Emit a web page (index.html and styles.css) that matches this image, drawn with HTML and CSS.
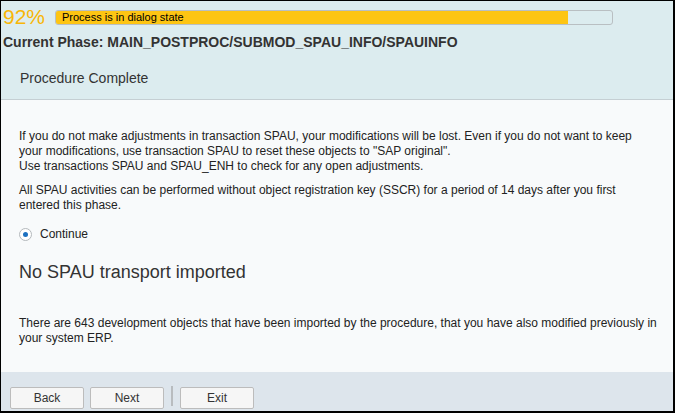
FILE: index.html
```html
<!DOCTYPE html>
<html>
<head>
<meta charset="utf-8">
<link rel="stylesheet" href="styles.css">
</head>
<body>
<div class="window">
  <div class="header">
    <div class="progress-row">
      <span class="pct">92%</span>
      <div class="bar">
        <div class="fill" style="width:92%"></div>
        <span class="bar-label">Process is in dialog state</span>
      </div>
    </div>
    <div class="phase">Current Phase: MAIN_POSTPROC/SUBMOD_SPAU_INFO/SPAUINFO</div>
    <div class="title">Procedure Complete</div>
  </div>
  <div class="content">
    <p class="para narrow first">If you do not make adjustments in transaction SPAU, your modifications will be lost. Even if you do not want to keep your modifications, use transaction SPAU to reset these objects to "SAP original".<br>Use transactions SPAU and SPAU_ENH to check for any open adjustments.</p>
    <p class="para narrow">All SPAU activities can be performed without object registration key (SSCR) for a period of 14 days after you first entered this phase.</p>
    <div class="radio-row">
      <span class="radio"><span class="dot"></span></span>
      <span class="radio-label">Continue</span>
    </div>
    <h2 class="heading">No SPAU transport imported</h2>
    <p class="para last">There are 643 development objects that have been imported by the procedure, that you have also modified previously in your system ERP.</p>
  </div>
  <div class="footer">
    <button class="btn">Back</button>
    <button class="btn">Next</button>
    <span class="sep"></span>
    <button class="btn">Exit</button>
  </div>
</div>
</body>
</html>
```
FILE: styles.css
```css
html, body {
  margin: 0;
  padding: 0;
}
body {
  font-family: "Liberation Sans", Arial, sans-serif;
  background: #ffffff;
}
.window {
  width: 675px;
  height: 413px;
  box-sizing: border-box;
  border-style: solid;
  border-color: #000;
  border-width: 1px 2px 2px 1px;
  display: flex;
  flex-direction: column;
  overflow: hidden;
}
.header {
  background: #dcecef;
  height: 99px;
  box-sizing: border-box;
  border-bottom: 1px solid #c5cfd3;
  padding: 4px 0 0 2px;
}
.progress-row {
  display: flex;
  align-items: center;
  height: 24px;
}
.pct {
  color: #f8b606;
  font-size: 21px;
  width: 52px;
  line-height: 24px;
}
.bar {
  position: relative;
  width: 558px;
  height: 15px;
  box-sizing: border-box;
  border: 1px solid #b9bfc2;
  border-radius: 3px;
  background: #dcecef;
  overflow: hidden;
  display: flex;
  align-items: center;
}
.fill {
  position: absolute;
  left: 0;
  top: 0;
  bottom: 0;
  background: #fdc513;
}
.bar-label {
  position: relative;
  font-size: 11px;
  color: #000;
  padding-left: 6px;
  line-height: 13px;
}
.phase {
  font-size: 14px;
  font-weight: bold;
  color: #333;
  margin-top: 5px;
  line-height: 16px;
}
.title {
  font-size: 14px;
  color: #333;
  margin-top: 20px;
  padding-left: 17px;
  line-height: 16px;
}
.content {
  flex: 1;
  background: #f8fafb;
  padding: 0 8px 0 18px;
  color: #222;
  font-size: 12px;
}
.para {
  margin: 0 0 9px;
  line-height: 15px;
}
.para.narrow {
  max-width: 622px;
}
.para.first {
  margin-top: 29px;
}
.radio-row {
  display: flex;
  align-items: center;
  gap: 8px;
  margin-top: 14px;
}
.radio {
  width: 13px;
  height: 13px;
  box-sizing: border-box;
  border: 1px solid #b4b9bc;
  border-radius: 50%;
  background: #fff;
  display: flex;
  align-items: center;
  justify-content: center;
}
.dot {
  width: 5px;
  height: 5px;
  border-radius: 50%;
  background: #1c70c0;
}
.radio-label {
  font-size: 12px;
  color: #222;
}
.heading {
  font-size: 18px;
  font-weight: normal;
  color: #333;
  margin: 21px 0 0;
  line-height: 20px;
}
.para.last {
  margin-top: 34px;
}
.footer {
  height: 39px;
  flex: none;
  background: #dde5ec;
  display: flex;
  align-items: flex-end;
  gap: 6px;
  padding: 0 0 2px 9px;
  box-sizing: border-box;
}
.btn {
  width: 74px;
  height: 22px;
  border: 1px solid #bcbcbc;
  border-radius: 2px;
  background: #f6f6f6;
  font-family: "Liberation Sans", Arial, sans-serif;
  font-size: 12px;
  color: #333;
  padding: 0;
}
.sep {
  width: 2px;
  height: 20px;
  background: #b8bcbf;
  margin: 0 1px 3px;
}
```
